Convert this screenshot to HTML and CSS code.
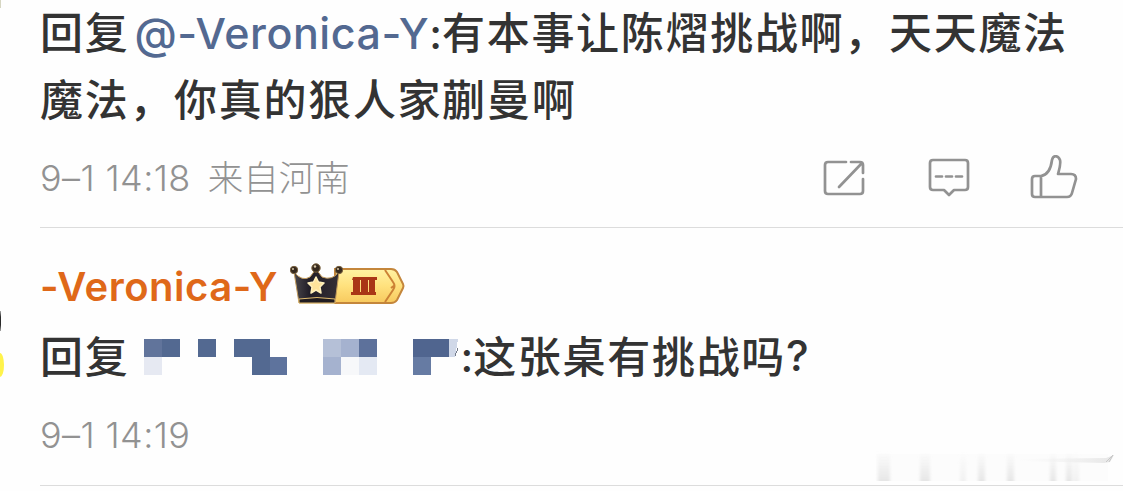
FILE: index.html
```html
<!DOCTYPE html>
<html lang="zh-CN">
<head>
<meta charset="utf-8">
<title>评论</title>
<link rel="stylesheet" href="styles.css">
</head>
<body>
<main class="comments">
  <article class="comment comment-first">
    <p class="text"><span class="cjk">回复</span><span class="mention">@-Veronica-Y</span><span class="colon">:</span><span class="cjk">有本事让陈熠挑战啊，天天魔法</span></p>
    <p class="text"><span class="cjk">魔法，你真的狠人家蒯曼啊</span></p>
    <footer class="meta">
      <span class="time">9–1 14:18</span><span class="place">来自河南</span>
      <div class="actions">
        <svg class="icon" width="42" height="38" viewBox="0 0 42 38"><path d="M23 3H5Q2 3 2 6V32Q2 35 5 35H37Q40 35 40 32V20M28 3H37Q40 3 40 6V14M16 28L39 4"/></svg>
        <svg class="icon" width="42" height="40" viewBox="0 0 42 40"><path d="M5 2H37Q40 2 40 5V29Q40 32 37 32H26L21 37L16 32H5Q2 32 2 29V5Q2 2 5 2ZM8 18.500H14M18 18.500H24M28 18.500H34"/></svg>
        <svg class="icon" width="48" height="46" viewBox="0 0 48 46"><path d="M11 21H5Q2 21 2 24V39Q2 42 5 42H37Q41 42 42 38L46 24Q46 19 41 19H28C30 12 31 9 30 5C28 0 23 0 22 5C21 13 18 20 11 21ZM11 21V42"/></svg>
      </div>
    </footer>
  </article>
  <article class="comment comment-second">
    <header class="author"><span class="name">-Veronica-Y</span>
      <svg class="badge" width="118" height="46" viewBox="0 0 118 46">
        <defs>
          <linearGradient id="gold" x2="0" y2="1"><stop stop-color="#fff2a3"/><stop offset=".5" stop-color="#ffe17d"/><stop offset="1" stop-color="#f7c95e"/></linearGradient>
          <linearGradient id="dark" x2="1"><stop stop-color="#4a474b"/><stop offset=".35" stop-color="#211d27"/><stop offset="1" stop-color="#352f35"/></linearGradient>
        </defs>
        <path d="M45 6H101Q105 6 107 9L113 21Q114 23 113 25L107 37Q105 40 101 40H45Z" fill="url(#gold)" stroke="#c4863b" stroke-width="2"/>
        <path d="M95 7L103 19Q106 23 103 27L95 39M105 22L101 25" fill="none" stroke="#cc8235" stroke-width="2"/>
        <path d="M4 9Q12 19 20 14L26 6L32 14Q42 18 49 9L45 40H9Z" fill="url(#dark)" stroke="#c19a5b"/>
        <path d="M9 36Q27 33 45 36V40H9Z" fill="#201b20" stroke="#e2bd70"/>
        <g fill="#35291e" stroke="#79613e"><circle cx="4" cy="7" r="3.7"/><circle cx="26" cy="5" r="4.200"/><circle cx="49" cy="7" r="3.700"/></g>
        <g fill="#d9c7a5"><circle cx="3" cy="6" r="1"/><circle cx="25" cy="3.500" r="1.200"/><circle cx="48" cy="6" r="1"/></g>
        <path d="M26 14L28.500 19L34 20L30 24L31 30L26 27L21 30L22 24L18 20L23.500 19Z" fill="#ffe39b" stroke="#fff0bc" stroke-width="1.500" stroke-linejoin="round"/>
        <path d="M63 14H87V17H85V29H86V32H61V29H63V17H62ZM70 17V29H71V17ZM78 17V29H79V17Z" fill="#a93616" fill-rule="evenodd"/>
      </svg>
    </header>
    <p class="text reply"><span class="cjk">回复</span><svg class="mosaic" width="316" height="36" viewBox="0 0 316 36" shape-rendering="crispEdges">
      <path d="M0 0H18V18H0Z" fill="#61749b"/><path d="M18 0H36V18H18ZM54 0H72V18H54Z" fill="#536991"/><path d="M0 18H18V36H0Z" fill="#e6e9f2"/>
      <path d="M90 0H126V18H143V36H108V18H90Z" fill="#536991"/><path d="M126 18H143V36H126Z" fill="#5e739d"/>
      <path d="M179 0H197V18H179Z" fill="#b5c0d7"/><path d="M197 0H215V18H197ZM179 18H197V36H179Z" fill="#a5b2cf"/><path d="M215 0H233V18H215Z" fill="#5d719b"/><path d="M197 18H215V36H197Z" fill="#f7f8fa"/><path d="M215 18H233V36H215Z" fill="#e4e9f3"/>
      <path d="M269 0H305V18H269Z" fill="#50658f"/><path d="M269 18H287V36H269Z" fill="#667ba3"/><path d="M305 0H314L311 18H305Z" fill="#d0d8e8"/><path d="M314 9L311 17" stroke="#747b8a"/>
    </svg><span class="colon">:</span><span class="cjk">这张桌有挑战吗</span><span class="question">?</span></p>
    <footer class="meta time-only"><span class="time">9–1 14:19</span></footer>
  </article>
</main>
<i class="edge edge-dark"></i><i class="edge edge-yellow"></i><i class="edge edge-top"></i>
<svg class="smear" width="255" height="36" viewBox="0 0 255 36">
  <defs><linearGradient id="fade" x2="0" y2="1"><stop stop-color="#e8e8e8" stop-opacity="0"/><stop offset="1" stop-color="#e4e4e4" stop-opacity=".9"/></linearGradient>
  <linearGradient id="trail"><stop stop-color="#f2f2f2" stop-opacity="0"/><stop offset="1" stop-color="#e6e6e6"/></linearGradient>
  <filter id="soft"><feGaussianBlur stdDeviation="1.800 0"/></filter></defs>
  <path d="M8 5H240V32H8Z" fill="#fcfcfc"/>
  <g fill="url(#fade)" filter="url(#soft)"><path d="M10 2H22V32H10ZM52 4H62V32H52ZM110 3H117V32H110ZM139 3H146V32H139ZM182 3H188V32H182ZM198 3H204V32H198Z"/><path d="M205 3H211V32H205ZM92 3H98V32H92Z" opacity=".5"/></g>
  <path d="M150 10L238 9L246 6L242 13L236 14L150 12Z" fill="url(#trail)"/><path d="M238 13L245 6L241 13" fill="none" stroke="#c9c9c9"/>
</svg>
</body>
</html>
```
FILE: styles.css
```css
* { box-sizing: border-box; }
body { margin: 0; width: 1123px; height: 491px; overflow: hidden; position: relative; background: #fefefe; color: #333; font-family: Inter, "Noto Sans CJK SC", sans-serif; }
p { margin: 0; }
.comments { padding-left: 40px; }
.comment { border-bottom: 1px solid #dcdcdc; }
.comment-first { height: 228px; }
.comment-second { height: 258px; padding-top: 28px; }
.text { display: flex; height: 67px; line-height: 66px; align-items: center; white-space: nowrap; font-weight: 500; font-size: 43px; }
.cjk { margin-bottom: 8px; font-family: "Noto Sans CJK SC", sans-serif; font-size: 43px; letter-spacing: 1.7px; }
.mention { margin: 0 0 2px 5px; font-size: 43px; letter-spacing: .55px; color: #536991; }
.colon { font-size: 42px; }
.meta { display: flex; align-items: center; height: 88px; color: #929292; font-size: 36px; font-weight: 300; }
.time { margin-bottom: 1px; letter-spacing: .4px; }
.place { margin: 0 0 6px 17px; font-family: "Noto Sans CJK SC", sans-serif; font-size: 35.5px; }
.actions { display: flex; align-items: center; gap: 63px; margin: 0 45px 0 auto; }
.actions .icon:last-child { margin-left: -3px; }
.icon { fill: none; stroke: #929292; stroke-width: 2.7; stroke-linecap: round; stroke-linejoin: round; }
.author { display: flex; align-items: center; height: 60px; color: #df6819; }
.name { font-size: 40px; font-weight: 600; letter-spacing: .5px; }
.badge { margin-left: 12px; }
.reply { margin-top: 7px; }
.reply .cjk { margin-bottom: 6px; }
.question { margin-bottom: 3px; }
.mosaic { margin-left: 15px; }
.time-only { height: 90px; }
.edge { position: absolute; left: 0; }
.edge-dark { top: 311px; width: 1px; height: 20px; background: linear-gradient(#aaa, #292929 30%, #292929 70%, #aaa); }
.edge-yellow { top: 353px; width: 4px; height: 24px; background: #fff34b; border-radius: 0 4px 4px 0 / 0 12px 12px 0; }
.edge-top { top: 0; width: 1px; height: 8px; background: #d6d6c2; }
.smear { position: absolute; left: 868px; top: 449px; }
```
